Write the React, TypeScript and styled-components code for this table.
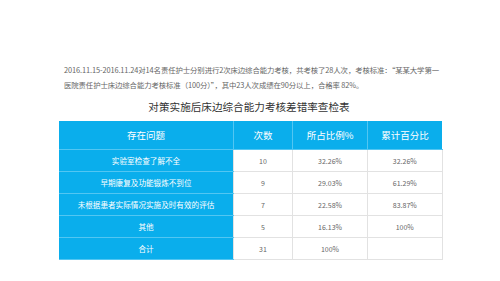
import React from 'react';
import styled, { createGlobalStyle } from 'styled-components';

const GlobalStyle = createGlobalStyle`
  html, body {
    margin: 0;
    padding: 0;
    background: #fff;
  }
  body {
    font-family: "Noto Sans CJK SC", "Noto Sans", sans-serif;
  }
`;

const Page = styled.div`
  width: 500px;
  height: 281px;
  padding: 62px 0 0 64px;
  box-sizing: border-box;
  overflow: hidden;
`;

const Intro = styled.p`
  width: 380px;
  margin: 0;
  font-size: 7.4px;
  line-height: 15px;
  color: #666;
  letter-spacing: -0.1px;
  white-space: nowrap;
`;

const Title = styled.h2`
  width: 380px;
  margin: 7px 0 0 -5px;
  font-size: 10.6px;
  line-height: 16px;
  font-weight: normal;
  color: #333;
  text-align: center;
`;

const Table = styled.table`
  margin: 6px 0 0 -5px;
  border-collapse: collapse;
  table-layout: fixed;
  width: 380px;
`;

const HeadCell = styled.th<{ w: number }>`
  width: ${({ w }) => w}px;
  height: 28px;
  padding: 0;
  background: #0aaeec;
  color: #fff;
  font-size: 9.5px;
  font-weight: normal;
  border-left: 1px solid #52c6f2;
  border-bottom: 1px solid #52c6f2;
  &:first-child {
    border-left: none;
  }
`;

const IssueCell = styled.td`
  height: 21px;
  padding: 0;
  background: #0aaeec;
  color: #fff;
  font-size: 7.6px;
  text-align: center;
  border-bottom: 1px solid #52c6f2;
`;

const DataCell = styled.td`
  height: 21px;
  padding: 0;
  background: #fff;
  color: #666;
  font-size: 7px;
  text-align: center;
  border: 1px solid #e2e2e2;
  border-top: none;
`;

const rows = [
  { issue: '实验室检查了解不全', count: '10', ratio: '32.26%', total: '32.26%' },
  { issue: '早期康复及功能锻炼不到位', count: '9', ratio: '29.03%', total: '61.29%' },
  { issue: '未根据患者实际情况实施及时有效的评估', count: '7', ratio: '22.58%', total: '83.87%' },
  { issue: '其他', count: '5', ratio: '16.13%', total: '100%' },
  { issue: '合计', count: '31', ratio: '100%', total: '' },
];

export default function App() {
  return (
    <>
      <GlobalStyle />
      <Page>
        <Intro>
          2016.11.15-2016.11.24对14名责任护士分别进行2次床边综合能力考核，共考核了28人次，考核标准：“某某大学第一
          <br />
          医院责任护士床边综合能力考核标准（100分）”，其中23人次成绩在90分以上，合格率 82%。
        </Intro>
        <Title>对策实施后床边综合能力考核差错率查检表</Title>
        <Table>
          <thead>
            <tr>
              <HeadCell w={174}>存在问题</HeadCell>
              <HeadCell w={58}>次数</HeadCell>
              <HeadCell w={74}>所占比例%</HeadCell>
              <HeadCell w={74}>累计百分比</HeadCell>
            </tr>
          </thead>
          <tbody>
            {rows.map((r) => (
              <tr key={r.issue}>
                <IssueCell>{r.issue}</IssueCell>
                <DataCell>{r.count}</DataCell>
                <DataCell>{r.ratio}</DataCell>
                <DataCell>{r.total}</DataCell>
              </tr>
            ))}
          </tbody>
        </Table>
      </Page>
    </>
  );
}
